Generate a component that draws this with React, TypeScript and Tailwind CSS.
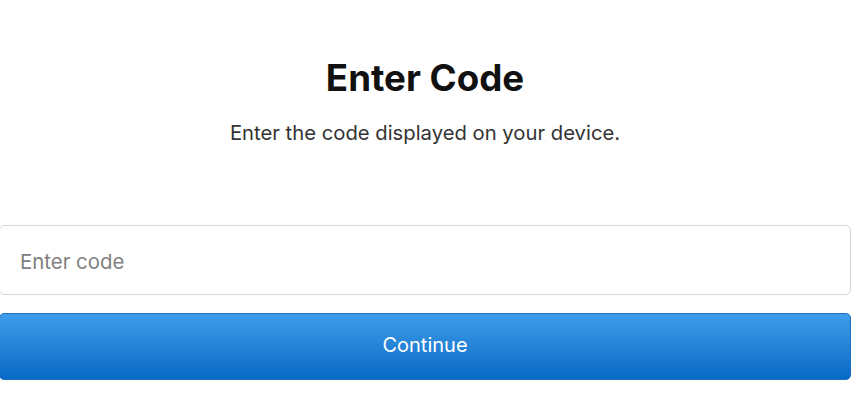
export default function App() {
  return (
    <div
      className="min-h-[408px] bg-white"
      style={{ fontFamily: 'Inter, "Noto Sans", sans-serif' }}
    >
      <div className="w-[852px] -ml-px pt-[54px]">
        <h1 className="text-center text-[36.7px] leading-[48px] font-bold text-[#111]">
          Enter Code
        </h1>
        <p className="mt-[17px] text-center text-[20.25px] leading-[28px] text-[#333]">
          Enter the code displayed on your device.
        </p>
        <input
          type="text"
          placeholder="Enter code"
          className="mt-[78px] block w-full h-[70px] rounded-[5px] border border-[#d6d6d6] pl-[20px] pr-[20px] pt-[2px] text-[20.4px] text-[#333] placeholder:text-[#808080] outline-none"
        />
        <button
          type="button"
          className="mt-[18px] block w-full h-[67px] rounded-[5px] border border-[#1d6fbf] bg-gradient-to-b from-[#3e9de9] to-[#0469c6] pb-[4px] text-[20px] text-white"
        >
          Continue
        </button>
      </div>
    </div>
  );
}
